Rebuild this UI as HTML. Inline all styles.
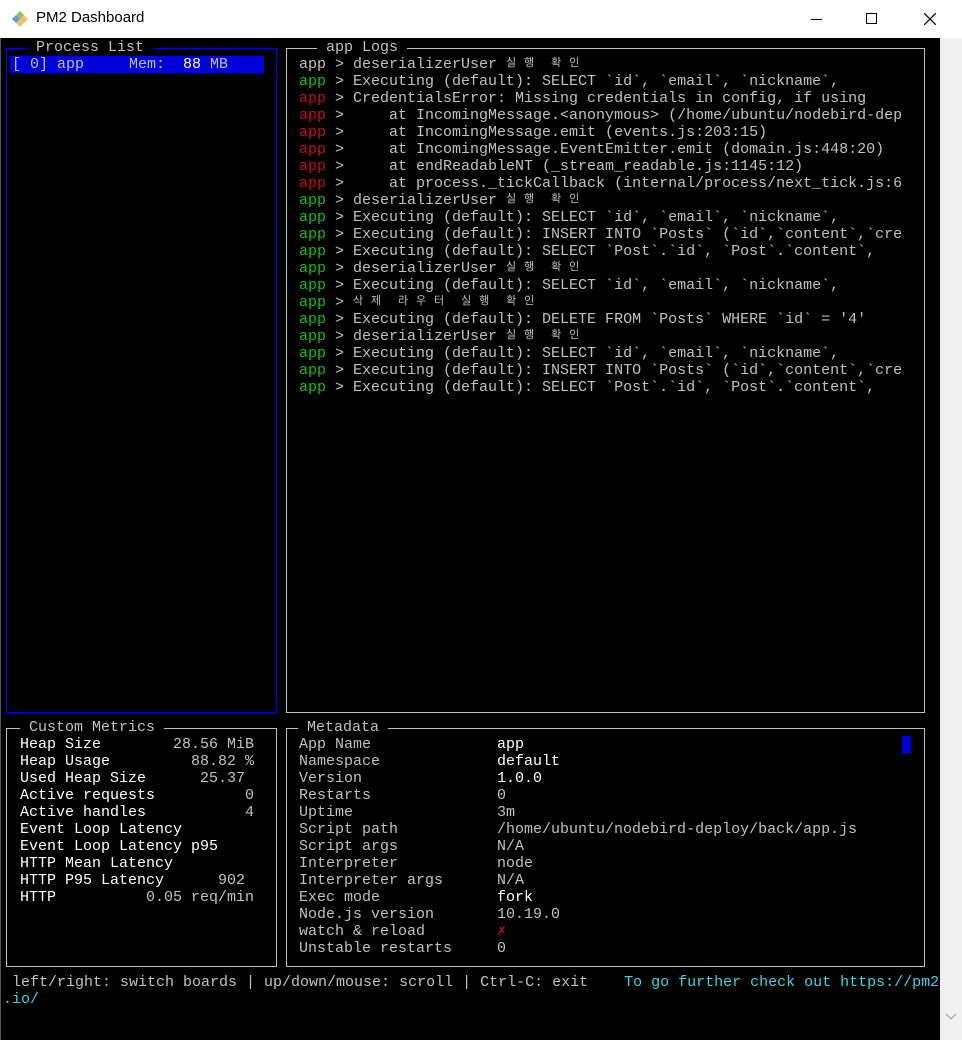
<!DOCTYPE html>
<html><head><meta charset="utf-8"><style>
*{margin:0;padding:0;box-sizing:border-box}
body{width:962px;height:1040px;background:#fff;position:relative;overflow:hidden;font-family:"Liberation Sans",sans-serif}
#term{position:absolute;left:0;top:38px;width:940px;height:1002px;background:#000;border-left:1px solid #555}
#sb{position:absolute;left:940px;top:38px;width:22px;height:1002px;background:#f0f0f0}
.m{font-family:"Liberation Mono","Noto Sans CJK KR",monospace;font-size:15px;line-height:17px;white-space:pre;position:absolute;color:#c0c0c0}
.box{position:absolute;border:1px solid #c0c0c0}
.t{position:absolute;top:-10px;background:#000;font-family:"Liberation Mono",monospace;font-size:15px;line-height:17px;white-space:pre;color:#c0c0c0}
.g{color:#13c10e}.r{color:#c50f1f}.w{color:#fff}.c{color:#3ad6e8}
.k{display:inline-block;width:18px;height:17px;line-height:17px;vertical-align:top;font-size:11px;text-align:left;overflow:hidden}
</style></head><body>
<svg style="position:absolute;left:10px;top:10px" width="20" height="18" viewBox="0 0 20 18"><path d="M10 1 L18 9 L10 17 L2 9Z" fill="#f0c070"/><path d="M2 9 L6 5 L10 9 L6 13Z" fill="#5aa0e0"/><path d="M10 1 L14 5 L10 9 L6 5Z" fill="#90c860"/></svg>
<div style="position:absolute;left:36px;top:9px;font-size:15px;color:#000">PM2 Dashboard</div>
<div style="position:absolute;left:811px;top:19px;width:11px;height:1px;background:#000"></div>
<div style="position:absolute;left:866px;top:13px;width:11px;height:11px;border:1px solid #000"></div>
<svg style="position:absolute;left:924px;top:13px" width="12" height="12"><path d="M0 0L12 12M12 0L0 12" stroke="#000" stroke-width="1.2"/></svg>
<div id="term"></div>
<div id="sb"><svg style="position:absolute;left:5px;top:975px" width="12" height="8"><path d="M1 1L6 6L11 1" stroke="#999" fill="none"/></svg></div>

<div class="box" style="left:6px;top:48px;width:271px;height:665px;border-color:#0000e0"><span class="t" style="left:20px"> Process List </span></div>
<div style="position:absolute;left:10px;top:56px;width:254px;height:17px;background:#0000d8"></div>
<div class="m" style="left:12px;top:56px">[ 0] app     Mem:  <span class="w">88</span> MB</div>

<div class="box" style="left:286px;top:48px;width:639px;height:665px"><span class="t" style="left:30px"> app Logs </span></div>
<div class="m" style="left:299px;top:56px">app &gt; deserializerUser <span class="k">실</span><span class="k">행</span> <span class="k">확</span><span class="k">인</span>
<span class="g">app</span> &gt; Executing (default): SELECT `id`, `email`, `nickname`,
<span class="r">app</span> &gt; CredentialsError: Missing credentials in config, if using
<span class="r">app</span> &gt;     at IncomingMessage.&lt;anonymous&gt; (/home/ubuntu/nodebird-dep
<span class="r">app</span> &gt;     at IncomingMessage.emit (events.js:203:15)
<span class="r">app</span> &gt;     at IncomingMessage.EventEmitter.emit (domain.js:448:20)
<span class="r">app</span> &gt;     at endReadableNT (_stream_readable.js:1145:12)
<span class="r">app</span> &gt;     at process._tickCallback (internal/process/next_tick.js:6
<span class="g">app</span> &gt; deserializerUser <span class="k">실</span><span class="k">행</span> <span class="k">확</span><span class="k">인</span>
<span class="g">app</span> &gt; Executing (default): SELECT `id`, `email`, `nickname`,
<span class="g">app</span> &gt; Executing (default): INSERT INTO `Posts` (`id`,`content`,`cre
<span class="g">app</span> &gt; Executing (default): SELECT `Post`.`id`, `Post`.`content`,
<span class="g">app</span> &gt; deserializerUser <span class="k">실</span><span class="k">행</span> <span class="k">확</span><span class="k">인</span>
<span class="g">app</span> &gt; Executing (default): SELECT `id`, `email`, `nickname`,
<span class="g">app</span> &gt; <span class="k">삭</span><span class="k">제</span> <span class="k">라</span><span class="k">우</span><span class="k">터</span> <span class="k">실</span><span class="k">행</span> <span class="k">확</span><span class="k">인</span>
<span class="g">app</span> &gt; Executing (default): DELETE FROM `Posts` WHERE `id` = '4'
<span class="g">app</span> &gt; deserializerUser <span class="k">실</span><span class="k">행</span> <span class="k">확</span><span class="k">인</span>
<span class="g">app</span> &gt; Executing (default): SELECT `id`, `email`, `nickname`,
<span class="g">app</span> &gt; Executing (default): INSERT INTO `Posts` (`id`,`content`,`cre
<span class="g">app</span> &gt; Executing (default): SELECT `Post`.`id`, `Post`.`content`,</div>

<div class="box" style="left:6px;top:728px;width:271px;height:239px"><span class="t" style="left:13px"> Custom Metrics </span></div>
<div class="m w" style="left:20px;top:736px">Heap Size        <span style="color:#c0c0c0">28.56 MiB</span>
Heap Usage         <span style="color:#c0c0c0">88.82 %</span>
Used Heap Size      <span style="color:#c0c0c0">25.37</span>
Active requests          <span style="color:#c0c0c0">0</span>
Active handles           <span style="color:#c0c0c0">4</span>
Event Loop Latency
Event Loop Latency p95
HTTP Mean Latency
HTTP P95 Latency      <span style="color:#c0c0c0">902</span>
HTTP          <span style="color:#c0c0c0">0.05 req/min</span></div>

<div class="box" style="left:286px;top:728px;width:639px;height:239px"><span class="t" style="left:11px"> Metadata </span></div>
<div style="position:absolute;left:902px;top:736px;width:9px;height:17px;background:#0000d8"></div>
<div class="m" style="left:299px;top:736px">App Name              <span class="w">app</span>
Namespace             <span class="w">default</span>
Version               <span class="w">1.0.0</span>
Restarts              0
Uptime                3m
Script path           /home/ubuntu/nodebird-deploy/back/app.js
Script args           N/A
Interpreter           node
Interpreter args      N/A
Exec mode             <span class="w">fork</span>
Node.js version       10.19.0
watch &amp; reload        <span class="r">✗</span>
Unstable restarts     0</div>

<div class="m" style="left:3px;top:974px"> left/right: switch boards | up/down/mouse: scroll | Ctrl-C: exit    <span class="c">To go further check out https://pm2</span>
<span class="c">.io/</span></div>
</body></html>
